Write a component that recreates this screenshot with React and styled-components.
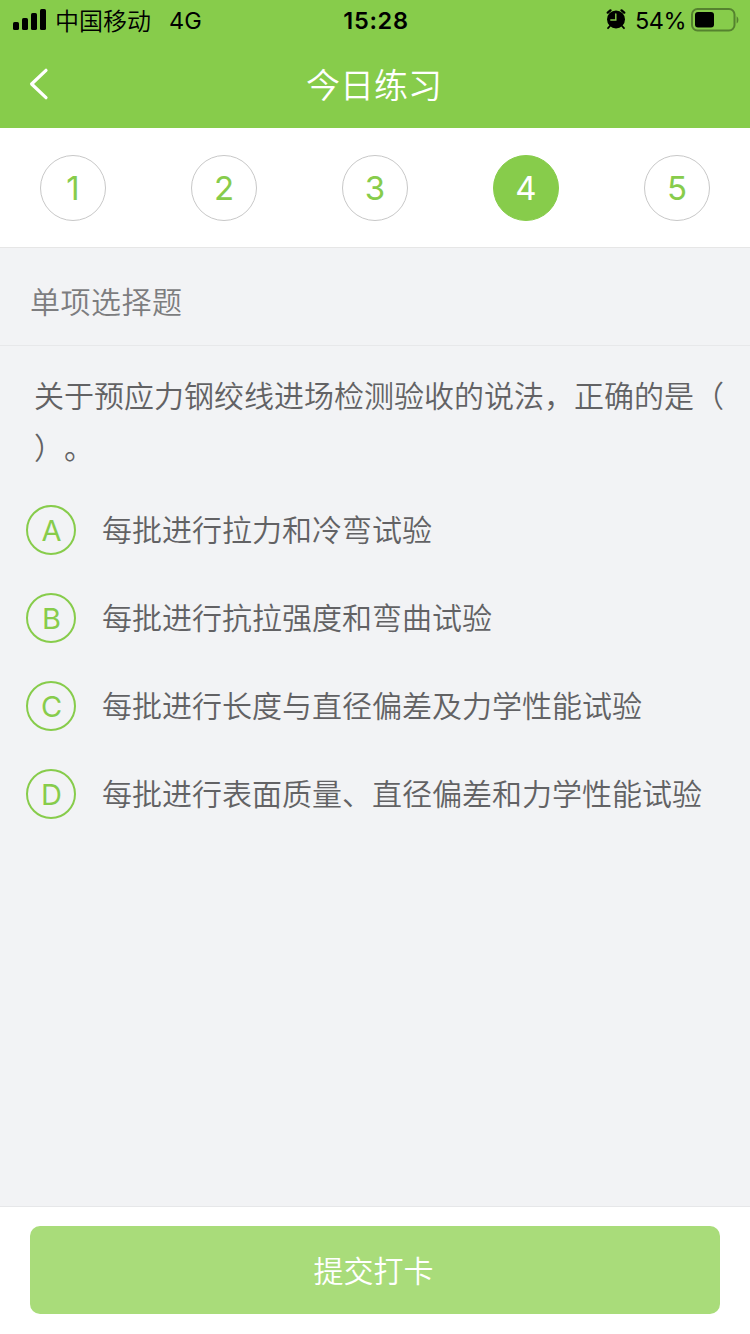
import React from "react"
import styled, { createGlobalStyle } from "styled-components"

const GlobalStyle = createGlobalStyle`
  * {
    box-sizing: border-box;
  }

  body {
    margin: 0;
    background: #f2f3f5;
    font-family: Inter, "Noto Sans CJK SC", sans-serif;
    text-spacing-trim: space-all;
  }
`

const Page = styled.div`
  display: flex;
  flex-direction: column;
  width: 750px;
  height: 1334px;
  overflow: hidden;
`

const Header = styled.header`
  height: 128px;
  background: #87cc4b;
`

const StatusBar = styled.div`
  display: grid;
  grid-template-columns: 1fr auto 1fr;
  align-items: center;
  height: 40px;
  padding: 0 11px 0 13px;
  font-size: 24px;
  line-height: 40px;
  color: #000;
`

const StatusGroup = styled.div`
  display: flex;
  align-items: center;
  justify-content: ${props => (props.$end ? "flex-end" : "flex-start")};
  white-space: nowrap;
`

const Carrier = styled.span`
  margin: 0 18px 0 8px;
  padding-top: 3px;
  font-weight: 350;
  line-height: 37px;
`

const Network = styled.span`
  padding-top: 2px;
  font-size: 23.5px;
  line-height: 38px;
`

const Clock = styled.span`
  padding-top: 2px;
  font-size: 23.5px;
  font-weight: 600;
  letter-spacing: 0.7px;
  line-height: 38px;
`

const Percent = styled.span`
  margin: 0 5px 0 9px;
  padding-top: 2px;
  font-size: 23.5px;
  letter-spacing: -0.5px;
  line-height: 38px;
`

const NavBar = styled.div`
  display: grid;
  grid-template-columns: 80px 1fr 80px;
  align-items: center;
  height: 88px;
`

const BackButton = styled.button`
  display: flex;
  padding: 0 0 0 28px;
  border: 0;
  background: none;
`

const Title = styled.h1`
  margin: 0;
  padding: 3px 2px 0 0;
  font-size: 34px;
  font-weight: 350;
  line-height: 85px;
  text-align: center;
  color: #fff;
`

const Steps = styled.nav`
  display: flex;
  justify-content: space-between;
  height: 120px;
  padding: 27px 40px 0;
  border-bottom: 1px solid #e6e6e6;
  background: #fff;
`

const Step = styled.button`
  width: 66px;
  height: 66px;
  padding: 1px 0 0;
  border: 1px solid ${props => (props.$active ? "#87cc4b" : "#c8c8c8")};
  border-radius: 50%;
  background: ${props => (props.$active ? "#87cc4b" : "#fff")};
  color: ${props => (props.$active ? "#fff" : "#87cc4b")};
  font-family: inherit;
  font-size: 33px;
  font-weight: 400;
  line-height: 63px;
`

const SectionTitle = styled.h2`
  height: 98px;
  margin: 0;
  padding-left: 30px;
  border-bottom: 1px solid #e7e8ea;
  font-size: 30px;
  font-weight: 350;
  letter-spacing: 0.5px;
  line-height: 109px;
  color: #7d7d7f;
`

const Content = styled.main`
  flex: 1;
  padding: 24px 0 0 26px;
`

const Question = styled.p`
  margin: 0 0 31px;
  padding-left: 8px;
  font-size: 30px;
  font-weight: 350;
  line-height: 52px;
  white-space: pre-line;
  color: #626264;
`

const Options = styled.ul`
  display: grid;
  gap: 38px;
  margin: 0;
  padding: 0;
  list-style: none;
`

const Option = styled.li`
  display: flex;
  align-items: center;
  gap: 26px;
  height: 50px;
  font-size: 30px;
  font-weight: 350;
  line-height: 50px;
  white-space: nowrap;
  color: #626264;
`

const OptionKey = styled.span`
  width: 50px;
  height: 50px;
  padding-left: 1px;
  border: 2px solid #87cc4b;
  border-radius: 50%;
  font-size: 29px;
  font-weight: 400;
  line-height: 48px;
  text-align: center;
  color: #87cc4b;
`

const Footer = styled.footer`
  height: 128px;
  padding: 19px 30px 0;
  border-top: 1px solid #e6e7e9;
  background: #fff;
`

const SubmitButton = styled.button`
  width: 100%;
  height: 88px;
  padding: 2px 3px 0 0;
  border: 0;
  border-radius: 10px;
  background: #a9dc7a;
  font-family: inherit;
  font-size: 30px;
  font-weight: 350;
  line-height: 86px;
  color: #fff;
`

const SignalIcon = () => (
  <svg width="34" height="22" viewBox="0 0 34 22">
    <rect x="0" y="13" width="6" height="8" rx="1.6" />
    <rect x="9" y="9" width="6" height="12" rx="1.6" />
    <rect x="18" y="4" width="6" height="17" rx="1.6" />
    <rect x="27" y="0" width="6" height="21" rx="1.6" />
  </svg>
)

const AlarmIcon = () => (
  <svg width="20" height="22" viewBox="0 0 20 22">
    <circle cx="10" cy="10.4" r="9" />
    <path d="M1.8 3.6 4.4 1.4M18.2 3.6 15.6 1.4" stroke="#000" strokeWidth="2.4" strokeLinecap="round" />
    <path d="m4 17-2 2.2M16 17l2 2.2" stroke="#000" strokeWidth="1.8" strokeLinecap="round" />
    <path d="M9.8 5v6H4.8" fill="none" stroke="#87cc4b" strokeWidth="1.4" strokeLinecap="round" />
  </svg>
)

const BatteryIcon = () => (
  <svg width="48" height="24" viewBox="0 0 48 24">
    <rect x="1" y="1" width="42.5" height="21.5" rx="5.5" fill="none" stroke="#55822f" strokeWidth="2" />
    <rect x="4" y="4" width="19" height="15.5" rx="3" />
    <path d="M45.6 8.2c2.4 1.4 2.4 6 0 7.4z" fill="#55822f" />
  </svg>
)

const BackIcon = () => (
  <svg width="22" height="32" viewBox="0 0 22 32">
    <path d="M18 2.3 3.6 16 18 29.7" fill="none" stroke="#fff" strokeWidth="3.2" strokeLinecap="round" strokeLinejoin="round" />
  </svg>
)

const steps = [1, 2, 3, 4, 5]

const options = [
  { key: "A", text: "每批进行拉力和冷弯试验" },
  { key: "B", text: "每批进行抗拉强度和弯曲试验" },
  { key: "C", text: "每批进行长度与直径偏差及力学性能试验" },
  { key: "D", text: "每批进行表面质量、直径偏差和力学性能试验" },
]

const App = () => (
  <Page lang="zh-CN">
    <GlobalStyle />

    <Header>
      <StatusBar>
        <StatusGroup>
          <SignalIcon />
          <Carrier>中国移动</Carrier>
          <Network>4G</Network>
        </StatusGroup>
        <Clock>15:28</Clock>
        <StatusGroup $end>
          <AlarmIcon />
          <Percent>54%</Percent>
          <BatteryIcon />
        </StatusGroup>
      </StatusBar>

      <NavBar>
        <BackButton aria-label="返回"><BackIcon /></BackButton>
        <Title>今日练习</Title>
      </NavBar>
    </Header>

    <Steps>
      {steps.map(step => (
        <Step key={step} $active={step === 4}>{step}</Step>
      ))}
    </Steps>

    <SectionTitle>单项选择题</SectionTitle>

    <Content>
      <Question>{"关于预应力钢绞线进场检测验收的说法，正确的是（\n）。"}</Question>

      <Options>
        {options.map(({ key, text }) => (
          <Option key={key}>
            <OptionKey>{key}</OptionKey>
            {text}
          </Option>
        ))}
      </Options>
    </Content>

    <Footer>
      <SubmitButton>提交打卡</SubmitButton>
    </Footer>
  </Page>
)

export default App
